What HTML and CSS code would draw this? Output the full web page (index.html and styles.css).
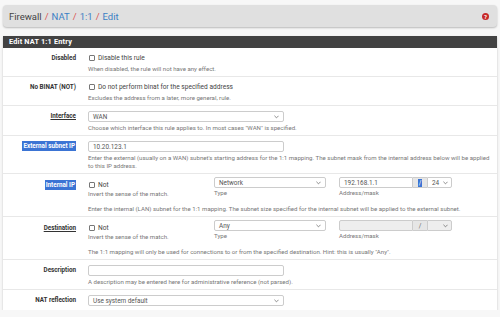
FILE: index.html
```html
<!DOCTYPE html>
<html lang="en">
<head>
    <meta charset="UTF-8">
    <meta name="viewport" content="width=device-width, initial-scale=1.0">
    <title>Firewall: NAT: 1:1: Edit</title>
    <link rel="stylesheet" href="styles.css">
</head>
<body>
    <div class="page">
        <header class="crumbs">
            <div class="crumbs__path">
                <span class="crumbs__root">Firewall</span><span class="crumbs__sep">/</span><a class="crumbs__link">NAT</a><span class="crumbs__sep">/</span><a class="crumbs__link">1:1</a><span class="crumbs__sep">/</span><a class="crumbs__link">Edit</a>
            </div>
            <span class="crumbs__help">?</span>
        </header>

        <section class="panel">
            <h2 class="panel__title">Edit NAT 1:1 Entry</h2>
            <div class="panel__body">

                <div class="row">
                    <div class="row__label">Disabled</div>
                    <div class="row__field">
                        <div class="check"><span class="check__box"></span>Disable this rule</div>
                        <p class="help">When disabled, the rule will not have any effect.</p>
                    </div>
                </div>

                <div class="row">
                    <div class="row__label">No BINAT (NOT)</div>
                    <div class="row__field">
                        <div class="check"><span class="check__box"></span>Do not perform binat for the specified address</div>
                        <p class="help">Excludes the address from a later, more general, rule.</p>
                    </div>
                </div>

                <div class="row">
                    <div class="row__label"><span class="required">Interface</span></div>
                    <div class="row__field">
                        <div class="control select">WAN
                            <svg class="chev" viewBox="0 0 6 4"><polyline points="0.5,0.5 3,3 5.5,0.5"/></svg>
                        </div>
                        <p class="help">Choose which interface this rule applies to. In most cases "WAN" is specified.</p>
                    </div>
                </div>

                <div class="row">
                    <div class="row__label"><span class="marked">External subnet IP</span></div>
                    <div class="row__field">
                        <div class="control">10.20.123.1</div>
                        <p class="help help--nowrap">Enter the external (usually on a WAN) subnet's starting address for the 1:1 mapping. The subnet mask from the internal address below will be applied<br>to this IP address.</p>
                    </div>
                </div>

                <div class="row row--multi">
                    <div class="row__label"><span class="marked">Internal IP</span></div>
                    <div class="row__field">
                        <div class="cols">
                            <div class="col col--check">
                                <div class="check"><span class="check__box"></span>Not</div>
                                <p class="caption">Invert the sense of the match.</p>
                            </div>
                            <div class="col col--type">
                                <div class="control select">Network
                                    <svg class="chev" viewBox="0 0 6 4"><polyline points="0.5,0.5 3,3 5.5,0.5"/></svg>
                                </div>
                                <p class="caption">Type</p>
                            </div>
                            <div class="col col--addr">
                                <div class="addr">
                                    <div class="addr__input">192.168.1.1</div>
                                    <div class="addr__slash"><span class="marked marked--slash">/</span></div>
                                    <div class="addr__mask">24
                                        <svg class="chev" viewBox="0 0 6 4"><polyline points="0.5,0.5 3,3 5.5,0.5"/></svg>
                                    </div>
                                </div>
                                <p class="caption">Address/mask</p>
                            </div>
                        </div>
                        <p class="help help--below">Enter the internal (LAN) subnet for the 1:1 mapping. The subnet size specified for the internal subnet will be applied to the external subnet.</p>
                    </div>
                </div>

                <div class="row row--multi">
                    <div class="row__label"><span class="required">Destination</span></div>
                    <div class="row__field">
                        <div class="cols">
                            <div class="col col--check">
                                <div class="check"><span class="check__box"></span>Not</div>
                                <p class="caption">Invert the sense of the match.</p>
                            </div>
                            <div class="col col--type">
                                <div class="control select">Any
                                    <svg class="chev" viewBox="0 0 6 4"><polyline points="0.5,0.5 3,3 5.5,0.5"/></svg>
                                </div>
                                <p class="caption">Type</p>
                            </div>
                            <div class="col col--addr">
                                <div class="addr addr--disabled">
                                    <div class="addr__input"></div>
                                    <div class="addr__slash">/</div>
                                    <div class="addr__mask">
                                        <svg class="chev" viewBox="0 0 6 4"><polyline points="0.5,0.5 3,3 5.5,0.5"/></svg>
                                    </div>
                                </div>
                                <p class="caption">Address/mask</p>
                            </div>
                        </div>
                        <p class="help help--below">The 1:1 mapping will only be used for connections to or from the specified destination. Hint: this is usually "Any".</p>
                    </div>
                </div>

                <div class="row">
                    <div class="row__label">Description</div>
                    <div class="row__field">
                        <div class="control"></div>
                        <p class="help">A description may be entered here for administrative reference (not parsed).</p>
                    </div>
                </div>

                <div class="row row--last">
                    <div class="row__label">NAT reflection</div>
                    <div class="row__field">
                        <div class="control select">Use system default
                            <svg class="chev" viewBox="0 0 6 4"><polyline points="0.5,0.5 3,3 5.5,0.5"/></svg>
                        </div>
                    </div>
                </div>

            </div>
        </section>
    </div>
</body>
</html>
```

FILE: styles.css
```css
* { margin: 0; padding: 0; box-sizing: border-box; }
body {
    font-family: Roboto, "Liberation Sans", Arial, sans-serif;
    background: #f7f7f7;
    color: #333;
}
.page{
    padding: 5px 3px 0 3px;
}

/* breadcrumb bar */
.crumbs{
    height: 22px;
    background: #e0e0e0;
    border-radius: 4px;
    box-shadow: 0 1px 2px rgba(0, 0, 0, 0.25);
    display: flex;
    align-items: center;
    justify-content: space-between;
    padding: 0 8px 0 6px;
    font-size: 9.5px;
}
.crumbs__root{
    color: #444;
}
.crumbs__sep{
    color: #d9534f;
    margin: 0 3px;
}
.crumbs__link{
    color: #3b7fc4;
}
.crumbs__help{
    width: 7px;
    height: 7px;
    border-radius: 50%;
    background: #c62828;
    color: #fff;
    font-size: 6px;
    font-weight: bold;
    line-height: 7px;
    text-align: center;
}

/* panel */
.panel{
    margin-top: 9px;
    background: #fff;
    box-shadow: 0 1px 2px rgba(0, 0, 0, 0.2);
}
.panel__title{
    height: 12px;
    line-height: 12px;
    background: #424242;
    color: #fff;
    font-size: 7.3px;
    font-weight: bold;
    letter-spacing: 0.2px;
    padding-left: 6px;
}
.row{
    display: flex;
    padding: 5px 0 3px;
    border-bottom: 1px solid #e8e8e8;
}
.row--multi{
    padding-top: 3px;
}
.row--last{
    border-bottom: none;
    padding-bottom: 4px;
}
.row__label{
    width: 85px;
    flex: none;
    text-align: right;
    padding-right: 12px;
    font-size: 6.3px;
    font-weight: bold;
    line-height: 10px;
    color: #333;
}
.row--multi .row__label{
    padding-top: 3px;
}
.required{
    text-decoration: underline;
}
.marked{
    display: inline-block;
    background: #3b74d4;
    color: #fff;
    padding: 0 1px;
}
.row__field{
    flex: 1;
    padding-right: 6px;
}

/* controls */
.check{
    display: flex;
    align-items: center;
    height: 10px;
    font-size: 6.6px;
    color: #444;
}
.check__box{
    width: 6px;
    height: 6px;
    border: 1px solid #777;
    border-radius: 1px;
    margin: 0 3px 0 1px;
    background: #fff;
}
.control{
    width: 196px;
    height: 11px;
    border: 1px solid #ccc;
    border-radius: 2px;
    padding: 0 4px;
    display: flex;
    align-items: center;
    justify-content: space-between;
    font-size: 6.4px;
    color: #555;
    background: #fff;
}
.chev{
    width: 5px;
    height: 4px;
    fill: none;
    stroke: #666;
    stroke-width: 0.9;
}
.help{
    font-size: 6.1px;
    line-height: 8px;
    color: #777;
    margin-top: 2px;
}
.help--nowrap{
    white-space: nowrap;
}
.help--below{
    margin-top: 7px;
}

/* multi column rows */
.cols{
    display: flex;
    align-items: flex-start;
}
.col--check{
    width: 126px;
    padding-top: 3px;
}
.col--type{
    width: 112px;
    margin-right: 13px;
}
.col--type .control{
    width: 100%;
}
.col--addr{
    width: 113px;
}
.caption{
    font-size: 6.1px;
    line-height: 8px;
    color: #777;
}
.col--type .caption,
.col--addr .caption{
    margin-top: 1px;
}
.addr{
    display: flex;
    height: 11px;
    font-size: 6.4px;
    color: #555;
}
.addr__input{
    width: 74px;
    border: 1px solid #ccc;
    border-radius: 2px 0 0 2px;
    padding: 0 4px;
    display: flex;
    align-items: center;
    background: #fff;
}
.addr__slash{
    width: 14px;
    border-top: 1px solid #ccc;
    border-bottom: 1px solid #ccc;
    background: #e6e6e6;
    display: flex;
    align-items: center;
    justify-content: center;
    color: #666;
}
.marked--slash{
    padding: 0 1px;
    line-height: 8px;
}
.addr__mask{
    width: 25px;
    border: 1px solid #ccc;
    border-radius: 0 2px 2px 0;
    padding: 0 3px 0 4px;
    display: flex;
    align-items: center;
    justify-content: space-between;
    background: #fff;
}
.addr--disabled .addr__input,
.addr--disabled .addr__mask{
    background: #eee;
}
.addr--disabled .addr__mask{
    justify-content: flex-end;
}
```
